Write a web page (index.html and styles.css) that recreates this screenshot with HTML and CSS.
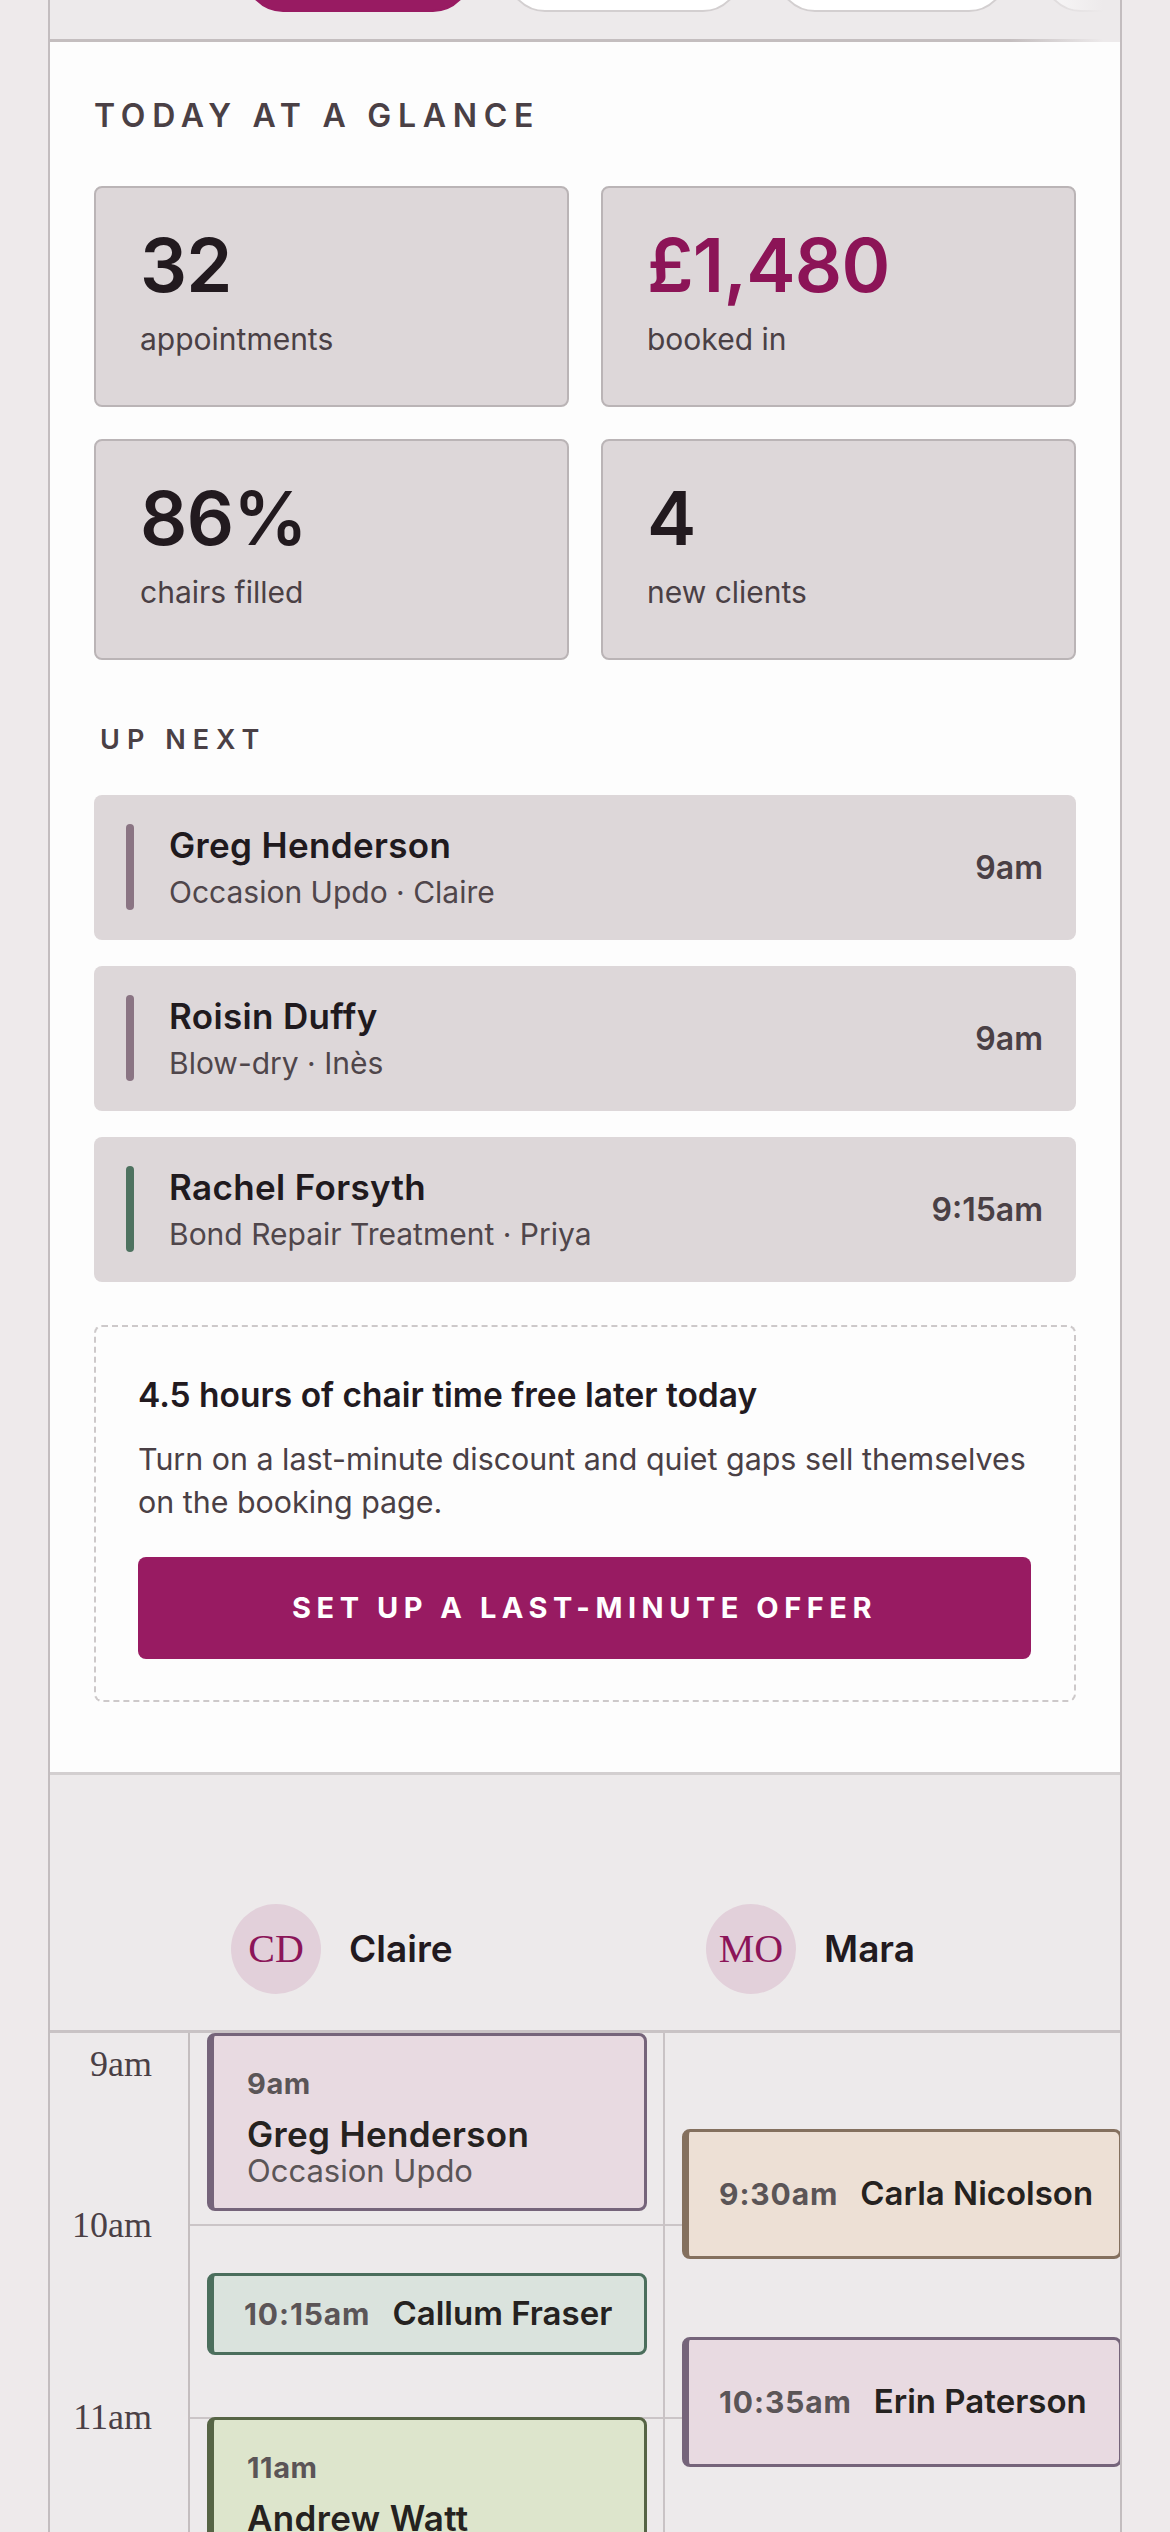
FILE: index.html
```html
<!DOCTYPE html>
<html lang="en">
<head>
<meta charset="utf-8">
<title>Today</title>
<link rel="stylesheet" href="styles.css">
</head>
<body>
<div class="app">
  <nav class="tabs" aria-label="Views">
    <span class="pill pill-active" aria-label="Day"></span>
    <span class="pill pill-w1" aria-label="Week"></span>
    <span class="pill pill-w2" aria-label="Month"></span>
    <span class="pill pill-w3" aria-label="List"></span>
  </nav>

  <section class="panel">
    <h2 class="eyebrow">Today at a glance</h2>
    <div class="stats">
      <div class="stat"><div class="stat-num">32</div><div class="stat-label">appointments</div></div>
      <div class="stat"><div class="stat-num stat-money">£1,480</div><div class="stat-label">booked in</div></div>
      <div class="stat"><div class="stat-num">86%</div><div class="stat-label">chairs filled</div></div>
      <div class="stat"><div class="stat-num">4</div><div class="stat-label">new clients</div></div>
    </div>

    <h2 class="eyebrow eyebrow-sm">Up next</h2>
    <div class="next-list">
      <div class="next-row">
        <span class="next-bar bar-mauve"></span>
        <div class="next-text">
          <div class="next-name">Greg Henderson</div>
          <div class="next-sub">Occasion Updo · Claire</div>
        </div>
        <div class="next-time">9am</div>
      </div>
      <div class="next-row">
        <span class="next-bar bar-mauve"></span>
        <div class="next-text">
          <div class="next-name">Roisin Duffy</div>
          <div class="next-sub">Blow-dry · Inès</div>
        </div>
        <div class="next-time">9am</div>
      </div>
      <div class="next-row">
        <span class="next-bar bar-green"></span>
        <div class="next-text">
          <div class="next-name">Rachel Forsyth</div>
          <div class="next-sub">Bond Repair Treatment · Priya</div>
        </div>
        <div class="next-time">9:15am</div>
      </div>
    </div>

    <div class="offer">
      <h3 class="offer-title">4.5 hours of chair time free later today</h3>
      <p class="offer-text">Turn on a last-minute discount and quiet gaps sell themselves on the booking page.</p>
      <a class="offer-btn" href="#offer">Set up a last-minute offer</a>
    </div>
  </section>

  <section class="calendar">
    <div class="cal-head">
      <div class="cal-gutter-head"></div>
      <div class="staff">
        <span class="avatar">CD</span>
        <span class="staff-name">Claire</span>
      </div>
      <div class="staff">
        <span class="avatar">MO</span>
        <span class="staff-name">Mara</span>
      </div>
    </div>
    <div class="cal-body">
      <div class="cal-gutter">
        <span class="hour" style="top:10px">9am</span>
        <span class="hour" style="top:171px">10am</span>
        <span class="hour" style="top:363px">11am</span>
      </div>
      <div class="cal-col">
        <div class="event ev-mauve ev-block" style="top:0px;height:178px">
          <div class="ev-time">9am</div>
          <div class="ev-name">Greg Henderson</div>
          <div class="ev-sub">Occasion Updo</div>
        </div>
        <div class="event ev-green ev-inline" style="top:240px;height:82px">
          <span class="ev-time">10:15am</span>
          <span class="ev-name">Callum Fraser</span>
        </div>
        <div class="event ev-olive ev-block" style="top:384px;height:274px">
          <div class="ev-time">11am</div>
          <div class="ev-name">Andrew Watt</div>
        </div>
      </div>
      <div class="cal-col">
        <div class="event ev-brown ev-inline" style="top:96px;height:130px">
          <span class="ev-time">9:30am</span>
          <span class="ev-name">Carla Nicolson</span>
        </div>
        <div class="event ev-mauve ev-inline" style="top:304px;height:130px">
          <span class="ev-time">10:35am</span>
          <span class="ev-name">Erin Paterson</span>
        </div>
      </div>
    </div>
  </section>
</div>
</body>
</html>
```

FILE: styles.css
```css
* { box-sizing: border-box; }

html, body {
  margin: 0;
  padding: 0;
  background: #eeeaeb;
}

body {
  font-family: "Inter", "Liberation Sans", sans-serif;
  color: #221a1f;
}

.app {
  width: 1074px;
  margin: 0 auto;
  border-left: 2px solid #c3bdbf;
  border-right: 2px solid #c3bdbf;
  overflow: hidden;
  background: #edeaeb;
}

/* ---------- top tab strip (scrolled partly out of view) ---------- */
.tabs {
  position: relative;
  display: flex;
  align-items: flex-start;
  gap: 36px;
  height: 42px;
  padding-left: 195px;
  border-bottom: 3px solid #c4bebf;
  background: #edeaeb;
}

.tabs::after {
  content: "";
  position: absolute;
  right: 0;
  top: 0;
  bottom: -3px;
  width: 110px;
  background: linear-gradient(to right, rgba(237, 234, 235, 0), #edeaeb 85%);
}

.pill {
  flex: none;
  height: 76px;
  margin-top: -64px;
  border-radius: 38px;
  background: #fff;
  border: 2px solid #d3cfd0;
}

.pill-active {
  width: 226px;
  background: #981b62;
  border-color: #981b62;
}

.pill-w1 { width: 234px; }
.pill-w2 { width: 230px; }
.pill-w3 { width: 200px; }

/* ---------- summary panel ---------- */
.panel {
  background: #fdfdfd;
  padding: 55px 44px 70px;
  border-bottom: 3px solid #d3cfd0;
}

.eyebrow {
  margin: 0 0 51px;
  font-size: 32px;
  line-height: 1.2;
  font-weight: 600;
  letter-spacing: 0.21em;
  text-transform: uppercase;
  color: #4a4045;
}

.eyebrow-sm {
  margin: 64px 0 38px 6px;
  font-size: 27px;
  letter-spacing: 0.26em;
}

.stats {
  display: grid;
  grid-template-columns: 1fr 1fr;
  gap: 32px 32px;
}

.stat {
  background: #ddd7d9;
  border: 2px solid #bab4b6;
  border-radius: 8px;
  padding: 40px 44px 48px;
}

.stat-num {
  font-size: 74px;
  line-height: 1;
  font-weight: 600;
  color: #221a1f;
  letter-spacing: -0.01em;
}

.stat-money { color: #8c1457; }

.stat-label {
  margin-top: 19px;
  font-size: 30px;
  line-height: 1.2;
  color: #4a4045;
}

/* ---------- up next ---------- */
.next-list {
  display: flex;
  flex-direction: column;
  gap: 26px;
}

.next-row {
  height: 145px;
  display: flex;
  align-items: center;
  padding: 0 33px 0 32px;
  background: #ddd7d9;
  border-radius: 8px;
}

.next-bar {
  flex: none;
  width: 8px;
  height: 86px;
  border-radius: 4px;
  margin-right: 35px;
}

.bar-mauve { background: #8a7483; }
.bar-green { background: #4e7260; }

.next-text { flex: 1; }

.next-name {
  font-size: 35px;
  line-height: 1.15;
  font-weight: 600;
  letter-spacing: 0.01em;
  color: #201a1e;
  margin-bottom: 9px;
}

.next-sub {
  font-size: 30px;
  line-height: 1.2;
  color: #4f464b;
}

.next-time {
  font-size: 32px;
  font-weight: 600;
  color: #4a4045;
}

/* ---------- offer ---------- */
.offer {
  margin-top: 43px;
  border: 2px dashed #cdc9ca;
  border-radius: 8px;
  padding: 48px 43px 41px 42px;
}

.offer-title {
  margin: 0;
  font-size: 33.5px;
  line-height: 1.2;
  font-weight: 600;
  color: #221a1f;
}

.offer-text {
  margin: 23px 0 0;
  font-size: 30.4px;
  line-height: 43px;
  color: #4a4045;
}

.offer-btn {
  display: flex;
  align-items: center;
  justify-content: center;
  height: 102px;
  margin-top: 33px;
  border-radius: 8px;
  background: #981b62;
  color: #fff;
  text-decoration: none;
  font-size: 29px;
  line-height: 1.2;
  font-weight: 700;
  letter-spacing: 0.19em;
  text-transform: uppercase;
}

/* ---------- calendar ---------- */
.calendar {
  background: #edeaeb;
  overflow: hidden;
}

.cal-head,
.cal-body {
  display: grid;
  grid-template-columns: 140px 475px 475px;
  width: 1090px;
}

.cal-head {
  padding: 129px 0 36px;
  border-bottom: 3px solid #c9c3c5;
}

.staff {
  display: flex;
  align-items: center;
  gap: 28px;
  padding-left: 41px;
}

.avatar {
  flex: none;
  width: 90px;
  height: 90px;
  border-radius: 50%;
  background: #e2d0da;
  color: #8b1559;
  font-family: "Liberation Serif", "DejaVu Serif", serif;
  font-size: 40px;
  display: flex;
  align-items: center;
  justify-content: center;
}

.staff-name {
  font-size: 37px;
  font-weight: 600;
  color: #221a1f;
}

.cal-body {
  height: 620px;
}

.cal-gutter {
  position: relative;
  border-right: 2px solid #c4bebf;
}

.hour {
  position: absolute;
  right: 36px;
  font-family: "Liberation Serif", "DejaVu Serif", serif;
  font-size: 36px;
  line-height: 43px;
  color: #4a4045;
}

.cal-col {
  position: relative;
  border-right: 2px solid #c9c3c5;
  background-image: repeating-linear-gradient(to bottom, transparent 0, transparent 191px, #cbc5c7 191px, #cbc5c7 193px);
}

.event {
  position: absolute;
  left: 17px;
  right: 16px;
  border: 3px solid;
  border-left-width: 7px;
  border-radius: 8px;
  overflow: hidden;
}

.ev-block {
  padding: 31px 20px 0 33px;
}

.ev-inline {
  display: flex;
  align-items: center;
  gap: 22px;
  padding-left: 30px;
  white-space: nowrap;
}

.ev-time {
  font-size: 29px;
  line-height: 1.2;
  font-weight: 700;
  letter-spacing: 0.02em;
  color: #5b5557;
}

.ev-inline .ev-time {
  font-size: 30px;
  letter-spacing: 0.03em;
}

.ev-name {
  font-size: 33px;
  line-height: 1.15;
  font-weight: 600;
  color: #252220;
}

.ev-block .ev-name {
  margin-top: 12px;
  font-size: 35px;
  letter-spacing: 0.01em;
}

.ev-sub {
  font-size: 31px;
  line-height: 1.1;
  color: #5b5557;
}

.ev-mauve { background: #e8dae1; border-color: #75647a; }
.ev-green { background: #dae3dd; border-color: #4b6e5c; }
.ev-olive { background: #dde5cc; border-color: #566445; }
.ev-brown { background: #ede0d5; border-color: #84705e; }
```
